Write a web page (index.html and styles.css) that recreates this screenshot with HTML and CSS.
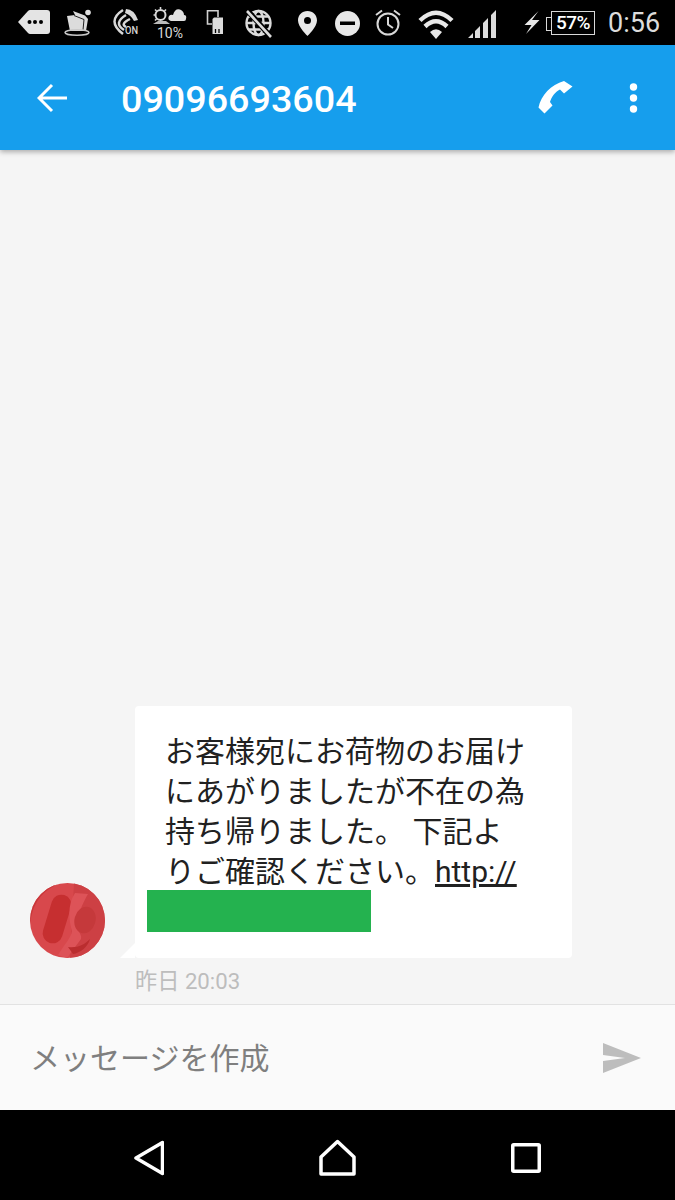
FILE: index.html
```html
<!DOCTYPE html>
<html lang="ja">
<head>
<meta charset="UTF-8">
<title>メッセージ</title>
<link rel="stylesheet" href="styles.css">
</head>
<body>
<div class="phone">

	<!-- status bar: each svg keeps its trailing gap inside its own viewBox -->
	<div class="status_bar">
		<svg width="46" height="45" viewBox="18 0 46 45">
			<path d="M18 22 L28 11 Q29 10 30 10 H47 Q50 10 50 13 V31 Q50 34 47 34 H30 Q29 34 28 33 Z" fill="#e4e4e4"/>
			<circle cx="29.500" cy="22" r="2" fill="#000"/><circle cx="35" cy="22" r="2" fill="#000"/><circle cx="41" cy="22" r="2" fill="#000"/>
		</svg>
		<svg width="46" height="45" viewBox="64 0 46 45">
			<path d="M67 16 L75 15 L73 11 L85 15.500 L88 19 L86 31 L70 31 Z" fill="#dcdcdc"/>
			<path d="M74 15.500 L84 19.500 L83 30" fill="none" stroke="#222" stroke-width="1"/>
			<circle cx="88" cy="12.500" r="2.800" fill="#e0e0e0"/>
			<ellipse cx="77" cy="32.500" rx="12" ry="2.800" fill="none" stroke="#c8c8c8" stroke-width="1.500"/>
		</svg>
		<svg width="43" height="45" viewBox="110 0 43 45">
			<path d="M126 9 Q134 9 138 20 L134 21 Q131 15 125 13 Z" fill="#d8d8d8"/>
			<g fill="none" stroke="#d8d8d8" stroke-width="2.500">
				<path d="M123 10 Q106 21 123 34"/>
				<path d="M126 15 Q113 23 124 30"/>
				<path d="M130 19 Q120 24 126 27"/>
			</g>
			<text x="125" y="34" class="tiny_text" textLength="13" lengthAdjust="spacingAndGlyphs">ON</text>
		</svg>
		<svg width="53" height="45" viewBox="153 0 53 45">
			<circle cx="160.500" cy="15" r="5" fill="none" stroke="#d8d8d8" stroke-width="2"/>
			<g stroke="#d8d8d8" stroke-width="1.600">
				<path d="M160.500 7 V9"/><path d="M153.500 15 H155"/><path d="M155 9.500 L156.500 11"/><path d="M166 9.500 L164.500 11"/><path d="M155 20.500 L156.500 19"/>
			</g>
			<path d="M153 24 H170 L166 21 H158 Z" fill="#bbb"/>
			<path d="M171 21 Q167 20 169 16 Q171 14 173 15 Q175 8 180 9.500 Q184 11 184 15 Q187 15 186 19 Q186 21 184 21 Z" fill="#e0e0e0"/>
			<text x="157" y="37.500" class="small_text">10%</text>
		</svg>
		<svg width="39" height="45" viewBox="206 0 39 45">
			<path d="M212 24 H207.500 V10.800 H218 V17" fill="none" stroke="#d0d0d0" stroke-width="1.600"/>
			<path d="M214 17.500 H223 V34 H212.500 V19 Z" fill="#dcdcdc"/>
			<path d="M215.500 29 V33 M219 29 V33" stroke="#000" stroke-width="1.300"/>
		</svg>
		<svg width="53" height="45" viewBox="245 0 53 45">
			<g fill="none" stroke="#dcdcdc" stroke-width="2.400">
				<circle cx="258.500" cy="23" r="12"/>
				<ellipse cx="258.500" cy="23" rx="5" ry="12"/>
				<path d="M247 23 H270 M249 16.500 H268 M249 29.500 H268"/>
			</g>
			<path d="M247 10 L271 37" stroke="#000" stroke-width="5.500"/>
			<path d="M247 11 L271 37" stroke="#dcdcdc" stroke-width="2.600"/>
		</svg>
		<svg width="37" height="45" viewBox="298 0 37 45">
			<path fill-rule="evenodd" fill="#e8e8e8" d="M307.500 11 C302 11 298 15 298 20.500 C298 27 307.500 36 307.500 36 C307.500 36 317 27 317 20.500 C317 15 313 11 307.500 11 Z M307.500 17 A3.500 3.500 0 1 1 307.500 24 A3.500 3.500 0 1 1 307.500 17 Z"/>
		</svg>
		<svg width="40" height="45" viewBox="335 0 40 45">
			<circle cx="347.500" cy="23.500" r="12.500" fill="#e8e8e8"/>
			<rect x="340" y="21.500" width="15" height="3.500" fill="#000"/>
		</svg>
		<svg width="43" height="45" viewBox="375 0 43 45">
			<g fill="none" stroke="#d8d8d8" stroke-width="2">
				<circle cx="388" cy="24" r="10.500"/>
				<path d="M388 17 V24.500 L393 28"/>
				<path d="M376 15 L382 10.500 M400 15 L394 10.500"/>
			</g>
		</svg>
		<svg width="50" height="45" viewBox="418 0 50 45">
			<g fill="none" stroke="#e8e8e8" stroke-width="4.500">
				<path d="M420 20.500 Q436 5 452 20.500"/>
				<path d="M425 26.500 Q436 16 447 26.500"/>
			</g>
			<path d="M430 32 Q436 26.500 442 32 L436 39 Z" fill="#e8e8e8"/>
		</svg>
		<svg width="56" height="45" viewBox="468 0 56 45">
			<path d="M468 38 L473 33 V38 Z M475 31 L480 26 V38 H475 Z M483 23 L488 18 V38 H483 Z M491 15 L496 10 V38 H491 Z" fill="#dcdcdc"/>
		</svg>
		<svg width="22" height="45" viewBox="524 0 22 45">
			<path d="M538.500 11 L524.500 25 H531.500 L526 34 L539.500 20 H532 Z" fill="#e8e8e8"/>
		</svg>
		<div class="battery"><span class="battery_text">57%</span></div>
		<span class="clock">0:56</span>
	</div>

	<!-- app bar -->
	<div class="app_bar">
		<svg class="back_icon" width="31" height="30" viewBox="0 0 31 30">
			<path d="M30 15 H3 M15 2 L2 15 L15 28" fill="none" stroke="#fff" stroke-width="3"/>
		</svg>
		<div class="title">09096693604</div>
		<svg class="call_icon" width="36" height="36" viewBox="0 0 36 36">
			<path fill="#fff" d="M26 1 L34.500 6.500 L26 13.500 L22 9.500 C17 12 13.500 17 12 22 L14.500 25.500 L6.500 33.500 L0.500 27.500 C3 15 13 5 26 1 Z"/>
		</svg>
		<svg class="menu_icon" width="13" height="30" viewBox="0 0 13 30">
			<circle cx="6.500" cy="4" r="3.700" fill="#fff"/><circle cx="6.500" cy="15" r="3.700" fill="#fff"/><circle cx="6.500" cy="26" r="3.700" fill="#fff"/>
		</svg>
	</div>

	<!-- message list -->
	<div class="messages">
		<div class="msg_row">
			<svg class="avatar" width="75" height="75" viewBox="0 0 75 75">
				<clipPath id="avatarClip"><circle cx="37.500" cy="37.500" r="37.500"/></clipPath>
				<g clip-path="url(#avatarClip)">
					<rect width="75" height="75" fill="#d8484c"/>
					<path d="M0 42 C2 20 12 8 30 0 L0 0 Z" fill="#c9373a"/>
					<path d="M44 0 H75 V75 H40 Z" fill="#cd4044"/>
					<rect x="17" y="11" width="20" height="50" rx="10" fill="#c62f30" transform="rotate(17 27 36)"/>
					<path d="M45 10 L58 11 C53 20 46 34 47 44 C49 50 52 52 51 56 L37 75 L28 72 C34 62 41 55 42 48 C39 38 37 22 45 10 Z" fill="#dd5358"/>
					<ellipse cx="55" cy="37" rx="10.500" ry="13.500" fill="#c5393b" transform="rotate(15 55 37)"/>
					<path d="M38 64 C48 65 54 62 60 56 C58 64 50 70 43 71 Z" fill="#ba2d2f"/>
				</g>
			</svg>
			<div class="msg_col">
				<div class="bubble">
					<p class="msg_text">お客様宛にお荷物のお届けにあがりましたが不在の為持ち帰りました。 下記よりご確認ください。<a class="msg_link">http://</a></p>
					<div class="hidden_url"></div>
				</div>
			</div>
		</div>
		<div class="msg_time">昨日 20:03</div>
	</div>

	<!-- compose row -->
	<div class="composer">
		<span class="placeholder">メッセージを作成</span>
		<svg width="38" height="30" viewBox="0 0 38 30">
			<path d="M0 0 L38 15 L0 30 V18 L22 15 L0 12 Z" fill="#bdbdbd"/>
		</svg>
	</div>

	<!-- navigation bar -->
	<div class="nav_bar">
		<svg width="30" height="36" viewBox="0 0 30 36">
			<path d="M28.500 2.500 V33.500 L2 18 Z" fill="none" stroke="#fff" stroke-width="3.500" stroke-linejoin="round" />
		</svg>
		<svg width="37" height="37" viewBox="0 0 37 37">
			<path d="M18.500 2.500 L35 18 V35 H2 V18 Z" fill="none" stroke="#fff" stroke-width="3.500" stroke-linejoin="round"/>
		</svg>
		<svg width="30" height="30" viewBox="0 0 30 30">
			<rect x="1.750" y="1.750" width="26.500" height="26.500" rx="1" fill="none" stroke="#fff" stroke-width="3.500"/>
		</svg>
	</div>

</div>
</body>
</html>
```

FILE: styles.css
```css
* {
	box-sizing: border-box;
}
body {
	margin: 0;
	font-family: Roboto, "Noto Sans CJK JP", sans-serif;
}
svg {
	display: block;
	flex-shrink: 0;
}
.phone {
	display: flex;
	flex-direction: column;
	height: 1200px;
	overflow: hidden;
	background-color: #f5f5f5;
}

.status_bar {
	display: flex;
	align-items: center;
	height: 45px;
	padding-left: 18px;
	background-color: #000000;
}
.tiny_text {
	font-size: 11px;
	font-weight: 500;
	fill: #d8d8d8;
}
.small_text {
	font-size: 14px;
	fill: #d8d8d8;
}
.battery {
	display: flex;
	align-items: center;
	justify-content: center;
	position: relative;
	width: 44px;
	height: 24px;
	margin-left: 5px;
	border: 1.5px solid #d8d8d8;
}
.battery::before {
	content: "";
	position: absolute;
	left: -6px;
	top: 5px;
	width: 5px;
	height: 12px;
	border: 1.5px solid #d8d8d8;
	border-right: none;
}
.battery_text {
	color: #ffffff;
	font-size: 19px;
	font-weight: 500;
	letter-spacing: -0.5px;
}
.clock {
	margin-left: 13px;
	color: #dcdcdc;
	font-size: 27px;
}

.app_bar {
	display: flex;
	align-items: center;
	height: 105px;
	padding: 0 35px 0 37px;
	background-color: #169eed;
	box-shadow: 0 2px 5px rgba(0, 0, 0, 0.3);
	position: relative;
}
.title {
	flex: 1;
	margin-left: 53px;
	padding-top: 2px;
	color: #ffffff;
	font-size: 37.7px;
	font-weight: 500;
}
.call_icon {
	margin-right: 53px;
}

.messages {
	flex: 1;
	display: flex;
	flex-direction: column;
	justify-content: flex-end;
	padding: 0 0 10px 30px;
}
.msg_row {
	display: flex;
	align-items: flex-end;
	gap: 30px;
}
.bubble {
	position: relative;
	width: 437px;
	padding: 26px 12px 26px;
	background-color: #ffffff;
	border-radius: 4px;
}
/* little tail at the bottom left corner */
.bubble::before {
	content: "";
	position: absolute;
	left: -15px;
	bottom: 0;
	width: 15px;
	height: 15px;
	background-color: #ffffff;
	clip-path: polygon(100% 0, 100% 100%, 0 100%);
}
.msg_text {
	margin: 0;
	width: 381px;
	padding-left: 18px;
	color: #212121;
	font-size: 30px;
	line-height: 40px;
}
.msg_link {
	text-decoration: underline;
}
.hidden_url {
	width: 224px;
	height: 42px;
	margin-top: -2px;
	background-color: #24b24f;
}
.msg_time {
	margin: 10px 0 0 105px;
	color: #bdbdbd;
	font-size: 22.2px;
	line-height: 26px;
}

.composer {
	display: flex;
	align-items: center;
	justify-content: space-between;
	height: 106px;
	padding: 0 34px 0 30px;
	background-color: #fafafa;
	border-top: 1px solid #e2e2e2;
}
.placeholder {
	padding-bottom: 4px;
	color: #7f7f7f;
	font-size: 30px;
}

.nav_bar {
	display: flex;
	align-items: center;
	justify-content: space-between;
	height: 90px;
	padding: 5px 134px 0;
	background-color: #000000;
}
```
